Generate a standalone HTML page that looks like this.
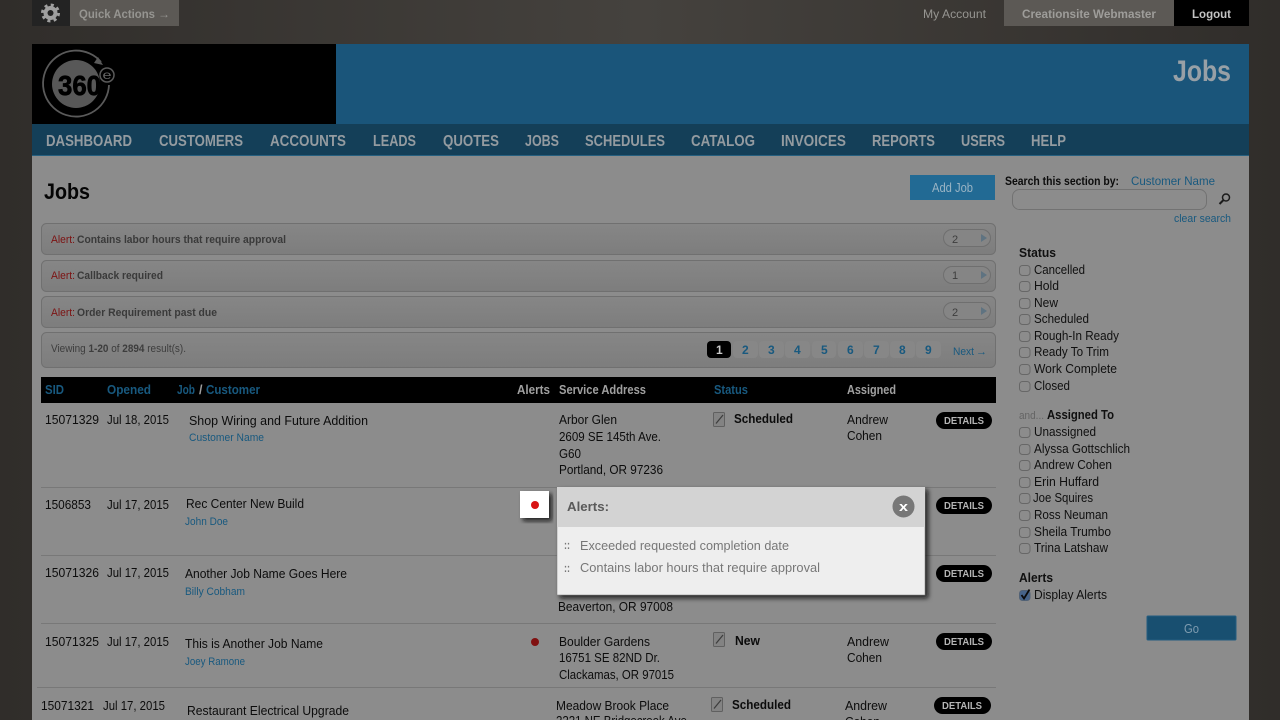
<!DOCTYPE html>
<html lang="en"><head><meta charset="utf-8"><title>Jobs</title>
<style>
html,body{margin:0;padding:0;background:#302d2a;width:1280px;height:720px;overflow:hidden}
svg{display:block;filter:blur(.3px)}
text{font-family:"Liberation Sans",Arial,sans-serif;font-size:13px;fill:#0c0c0c;white-space:pre}
.b{font-weight:700}
.hb{fill:#18597f;font-weight:700}
.nav{font-size:16px;font-weight:700;fill:#949ba0}
.al{font-size:11px;fill:#7c1212}
.at{font-size:11px;font-weight:700;fill:#3a3a3a}
.sm{font-size:11px;fill:#18597f}
.pg{font-size:12px;font-weight:700;fill:#18597f}
.det{font-size:10px;font-weight:700;fill:#b5b5b5}
.pop{fill:#777}
.cb{fill:#8c8c8c;stroke:#676767;stroke-width:1}
.side{font-size:12.5px;fill:#101010}
.div{fill:#787878}
.arr{font-family:"DejaVu Sans",sans-serif}
</style></head><body>
<svg width="1280" height="720" viewBox="0 0 1280 720" xmlns="http://www.w3.org/2000/svg">
<defs>
<linearGradient id="bg" x1="0" x2="1" y1="0" y2="0"><stop offset="0" stop-color="#302d2a"/><stop offset=".5" stop-color="#45423e"/><stop offset="1" stop-color="#302d2a"/></linearGradient>
<linearGradient id="bar" x1="0" x2="0" y1="0" y2="1"><stop offset="0" stop-color="#868686"/><stop offset="1" stop-color="#7d7d7d"/></linearGradient>
<filter id="sh" x="-10%" y="-10%" width="125%" height="130%"><feDropShadow dx="3" dy="3" stdDeviation="2.5" flood-color="#111" flood-opacity=".85"/></filter>
<g id="ed"><rect x=".5" y=".5" width="11" height="14" rx="1" fill="#838383" stroke="#606060"/><path d="M3 11.500 L10 3" stroke="#3c3c3c" stroke-width="1.200" fill="none"/></g>
<g id="pill"><rect x=".5" y=".5" width="47" height="17" rx="8.500" fill="#858585" stroke="#6f6f6f"/><path d="M38 5 L44 9 L38 13 Z" fill="#5f7381"/></g>
</defs>
<rect width="1280" height="720" fill="url(#bg)"/>

<!-- top bar -->
<rect x="32" width="38" height="26" fill="#232323"/>
<circle cx="50.500" cy="13" r="8" fill="none" stroke="#a0a0a0" stroke-width="3" stroke-dasharray="3 3.280"/>
<circle cx="50.500" cy="13" r="7" fill="#a0a0a0"/>
<circle cx="50.500" cy="13" r="3" fill="#232323"/>
<rect x="70" width="109" height="26" fill="#5c5955"/>
<text x="79" y="18" class="b" style="font-size:12px;fill:#969591" textLength="76" lengthAdjust="spacingAndGlyphs">Quick Actions</text>
<text x="158" y="18" style="font-size:12px;fill:#969591" textLength="12" lengthAdjust="spacingAndGlyphs">→</text>
<text x="923" y="18" style="font-size:12px;fill:#969591" textLength="63" lengthAdjust="spacingAndGlyphs">My Account</text>
<rect x="1004" width="170" height="26" fill="#5c5955"/>
<text x="1022" y="18" class="b" style="font-size:12px;fill:#9e9d9a" textLength="134" lengthAdjust="spacingAndGlyphs">Creationsite Webmaster</text>
<rect x="1174" width="75" height="26" fill="#000"/>
<text x="1192" y="18" class="b" style="font-size:12px;fill:#c4c4c4" textLength="39" lengthAdjust="spacingAndGlyphs">Logout</text>

<!-- header -->
<rect x="32" y="44" width="304" height="80" fill="#000"/>
<rect x="336" y="44" width="913" height="80" fill="#1a557a"/>
<circle cx="76" cy="84" r="24" fill="#585858"/>
<path d="M101 62 A33 33 0 1 0 109 85" fill="none" stroke="#5a5a5a" stroke-width="1.800"/>
<path d="M98 57 L103 65 L94 63 Z" fill="#5a5a5a"/>
<text x="58" y="95" class="b" style="font-size:28px;fill:#000;stroke:#000;stroke-width:.7" textLength="43" lengthAdjust="spacingAndGlyphs">360</text>
<circle cx="107" cy="75" r="7" fill="#000" stroke="#5a5a5a" stroke-width="1.500"/>
<text x="102.500" y="79" style="font-size:12px;fill:#666" textLength="9" lengthAdjust="spacingAndGlyphs">e</text>
<text x="1173" y="81" class="b" style="font-size:30px;fill:#98a0a6" textLength="58" lengthAdjust="spacingAndGlyphs">Jobs</text>

<!-- nav -->
<rect x="32" y="124" width="1217" height="31" fill="#143f58"/>
<rect x="32" y="155" width="1217" height="1" fill="#266080"/>
<text x="46" y="146" class="nav" textLength="86" lengthAdjust="spacingAndGlyphs">DASHBOARD</text>
<text x="159" y="146" class="nav" textLength="84" lengthAdjust="spacingAndGlyphs">CUSTOMERS</text>
<text x="270" y="146" class="nav" textLength="76" lengthAdjust="spacingAndGlyphs">ACCOUNTS</text>
<text x="373" y="146" class="nav" textLength="43" lengthAdjust="spacingAndGlyphs">LEADS</text>
<text x="443" y="146" class="nav" textLength="56" lengthAdjust="spacingAndGlyphs">QUOTES</text>
<text x="525" y="146" class="nav" textLength="34" lengthAdjust="spacingAndGlyphs">JOBS</text>
<text x="585" y="146" class="nav" textLength="80" lengthAdjust="spacingAndGlyphs">SCHEDULES</text>
<text x="691" y="146" class="nav" textLength="64" lengthAdjust="spacingAndGlyphs">CATALOG</text>
<text x="781" y="146" class="nav" textLength="65" lengthAdjust="spacingAndGlyphs">INVOICES</text>
<text x="872" y="146" class="nav" textLength="63" lengthAdjust="spacingAndGlyphs">REPORTS</text>
<text x="961" y="146" class="nav" textLength="44" lengthAdjust="spacingAndGlyphs">USERS</text>
<text x="1031" y="146" class="nav" textLength="35" lengthAdjust="spacingAndGlyphs">HELP</text>

<!-- content -->
<rect x="32" y="156" width="1217" height="564" fill="#8c8c8c"/>
<text x="44" y="199" class="b" style="font-size:22px;fill:#050505" textLength="46" lengthAdjust="spacingAndGlyphs">Jobs</text>
<rect x="910" y="175" width="85" height="25" fill="#226a94"/>
<text x="932" y="192" style="font-size:12.500px;fill:#9ab4c4" textLength="41" lengthAdjust="spacingAndGlyphs">Add Job</text>
<text x="1005" y="185" style="font-size:12px;fill:#0c0c0c;font-weight:700" textLength="114" lengthAdjust="spacingAndGlyphs">Search this section by:</text>
<text x="1131" y="185" style="font-size:12px;fill:#18597f" textLength="84" lengthAdjust="spacingAndGlyphs">Customer Name</text>
<rect x="1012.500" y="189.500" width="194" height="20" rx="7" fill="#8c8c8c" stroke="#727272"/>
<circle cx="1226" cy="197.500" r="3.500" fill="none" stroke="#1c1c1c" stroke-width="1.500"/>
<path d="M1223.500 200 L1219.500 204" stroke="#1c1c1c" stroke-width="2"/>
<text x="1174" y="222" style="font-size:11px;fill:#18597f" textLength="57" lengthAdjust="spacingAndGlyphs">clear search</text>

<!-- alert bars -->
<rect x="41.500" y="223.500" width="954" height="31" rx="5" fill="url(#bar)" stroke="#707070"/>
<rect x="41.500" y="260.500" width="954" height="31" rx="5" fill="url(#bar)" stroke="#707070"/>
<rect x="41.500" y="296.500" width="954" height="31" rx="5" fill="url(#bar)" stroke="#707070"/>
<rect x="41.500" y="332.500" width="954" height="35" rx="5" fill="url(#bar)" stroke="#707070"/>
<text x="51" y="243" class="al" textLength="24" lengthAdjust="spacingAndGlyphs">Alert:</text>
<text x="77" y="243" class="at" textLength="209" lengthAdjust="spacingAndGlyphs">Contains labor hours that require approval</text>
<text x="51" y="279" class="al" textLength="24" lengthAdjust="spacingAndGlyphs">Alert:</text>
<text x="77" y="279" class="at" textLength="86" lengthAdjust="spacingAndGlyphs">Callback required</text>
<text x="51" y="316" class="al" textLength="24" lengthAdjust="spacingAndGlyphs">Alert:</text>
<text x="77" y="316" class="at" textLength="140" lengthAdjust="spacingAndGlyphs">Order Requirement past due</text>
<text x="51" y="352" style="font-size:11px;fill:#3d3d3d" textLength="135" lengthAdjust="spacingAndGlyphs">Viewing <tspan font-weight="700">1-20</tspan> of <tspan font-weight="700">2894</tspan> result(s).</text>
<use href="#pill" x="943" y="229"/><use href="#pill" x="943" y="266"/><use href="#pill" x="943" y="302"/>
<text x="952" y="243" style="font-size:11px;fill:#3d3d3d">2</text>
<text x="952" y="279" style="font-size:11px;fill:#3d3d3d">1</text>
<text x="952" y="316" style="font-size:11px;fill:#3d3d3d">2</text>

<!-- pagination -->
<rect x="707" y="341" width="24" height="17" rx="4" fill="#000"/>
<rect x="733" y="341" width="25" height="17" rx="4" fill="#878787"/>
<rect x="759" y="341" width="25" height="17" rx="4" fill="#878787"/>
<rect x="785" y="341" width="25" height="17" rx="4" fill="#878787"/>
<rect x="812" y="341" width="24" height="17" rx="4" fill="#878787"/>
<rect x="838" y="341" width="25" height="17" rx="4" fill="#878787"/>
<rect x="864" y="341" width="25" height="17" rx="4" fill="#878787"/>
<rect x="890" y="341" width="25" height="17" rx="4" fill="#878787"/>
<rect x="916" y="341" width="25" height="17" rx="4" fill="#878787"/>
<text x="716" y="354" class="pg" style="fill:#c8c8c8">1</text>
<text x="742" y="354" class="pg">2</text><text x="768" y="354" class="pg">3</text><text x="794" y="354" class="pg">4</text><text x="821" y="354" class="pg">5</text><text x="847" y="354" class="pg">6</text><text x="873" y="354" class="pg">7</text><text x="899" y="354" class="pg">8</text><text x="925" y="354" class="pg">9</text>
<text x="953" y="355" style="font-size:11px;fill:#18597f" textLength="21" lengthAdjust="spacingAndGlyphs">Next</text>
<text x="976" y="355" style="font-size:11px;fill:#18597f" textLength="11" lengthAdjust="spacingAndGlyphs">→</text>

<!-- table head -->
<rect x="41" y="377" width="955" height="26" fill="#000"/>
<text x="45" y="394" class="hb" style="font-size:12.500px" textLength="19" lengthAdjust="spacingAndGlyphs">SID</text>
<text x="107" y="394" class="hb" style="font-size:12.500px" textLength="44" lengthAdjust="spacingAndGlyphs">Opened</text>
<text x="177" y="394" class="hb" style="font-size:12.500px" textLength="18" lengthAdjust="spacingAndGlyphs">Job</text>
<text x="199" y="394" class="b" style="font-size:12.500px;fill:#a0a0a0">/</text>
<text x="206" y="394" class="hb" style="font-size:12.500px" textLength="54" lengthAdjust="spacingAndGlyphs">Customer</text>
<text x="517" y="394" class="b" style="font-size:12.500px;fill:#a0a0a0" textLength="33" lengthAdjust="spacingAndGlyphs">Alerts</text>
<text x="559" y="394" class="b" style="font-size:12.500px;fill:#a0a0a0" textLength="87" lengthAdjust="spacingAndGlyphs">Service Address</text>
<text x="714" y="394" class="hb" style="font-size:12.500px" textLength="34" lengthAdjust="spacingAndGlyphs">Status</text>
<text x="847" y="394" class="b" style="font-size:12.500px;fill:#a0a0a0" textLength="49" lengthAdjust="spacingAndGlyphs">Assigned</text>

<!-- row 1 -->
<text x="45" y="424" textLength="54" lengthAdjust="spacingAndGlyphs">15071329</text>
<text x="107" y="424" textLength="62" lengthAdjust="spacingAndGlyphs">Jul 18, 2015</text>
<text x="189" y="425" textLength="179" lengthAdjust="spacingAndGlyphs">Shop Wiring and Future Addition</text>
<text x="189" y="441" class="sm" textLength="75" lengthAdjust="spacingAndGlyphs">Customer Name</text>
<text x="559" y="424" textLength="58" lengthAdjust="spacingAndGlyphs">Arbor Glen</text>
<text x="559" y="441" textLength="102" lengthAdjust="spacingAndGlyphs">2609 SE 145th Ave.</text>
<text x="559" y="458" textLength="22" lengthAdjust="spacingAndGlyphs">G60</text>
<text x="559" y="474" textLength="104" lengthAdjust="spacingAndGlyphs">Portland, OR 97236</text>
<use href="#ed" x="713" y="412"/>
<text x="734" y="423" class="b" textLength="59" lengthAdjust="spacingAndGlyphs">Scheduled</text>
<text x="847" y="424" textLength="41" lengthAdjust="spacingAndGlyphs">Andrew</text>
<text x="847" y="440" textLength="35" lengthAdjust="spacingAndGlyphs">Cohen</text>
<rect x="936" y="412" width="56" height="17" rx="8.500" fill="#000"/>
<text x="944" y="424" class="det" textLength="40" lengthAdjust="spacingAndGlyphs">DETAILS</text>
<rect x="41" y="487" width="955" height="1" class="div"/>

<!-- row 2 -->
<text x="45" y="509" textLength="46" lengthAdjust="spacingAndGlyphs">1506853</text>
<text x="107" y="509" textLength="62" lengthAdjust="spacingAndGlyphs">Jul 17, 2015</text>
<text x="186" y="508" textLength="118" lengthAdjust="spacingAndGlyphs">Rec Center New Build</text>
<text x="185" y="525" class="sm" textLength="43" lengthAdjust="spacingAndGlyphs">John Doe</text>
<rect x="936" y="497" width="56" height="17" rx="8.500" fill="#000"/>
<text x="944" y="509" class="det" textLength="40" lengthAdjust="spacingAndGlyphs">DETAILS</text>
<rect x="41" y="555" width="955" height="1" class="div"/>

<!-- row 3 -->
<text x="45" y="577" textLength="54" lengthAdjust="spacingAndGlyphs">15071326</text>
<text x="107" y="577" textLength="62" lengthAdjust="spacingAndGlyphs">Jul 17, 2015</text>
<text x="185" y="578" textLength="162" lengthAdjust="spacingAndGlyphs">Another Job Name Goes Here</text>
<text x="185" y="595" class="sm" textLength="60" lengthAdjust="spacingAndGlyphs">Billy Cobham</text>
<text x="558" y="611" textLength="115" lengthAdjust="spacingAndGlyphs">Beaverton, OR 97008</text>
<rect x="936" y="565" width="56" height="17" rx="8.500" fill="#000"/>
<text x="944" y="577" class="det" textLength="40" lengthAdjust="spacingAndGlyphs">DETAILS</text>
<rect x="41" y="623" width="955" height="1" class="div"/>

<!-- row 4 -->
<text x="45" y="646" textLength="54" lengthAdjust="spacingAndGlyphs">15071325</text>
<text x="107" y="646" textLength="62" lengthAdjust="spacingAndGlyphs">Jul 17, 2015</text>
<text x="185" y="648" textLength="138" lengthAdjust="spacingAndGlyphs">This is Another Job Name</text>
<text x="185" y="665" class="sm" textLength="60" lengthAdjust="spacingAndGlyphs">Joey Ramone</text>
<circle cx="535" cy="642" r="4" fill="#801010"/>
<text x="559" y="646" textLength="91" lengthAdjust="spacingAndGlyphs">Boulder Gardens</text>
<text x="559" y="662" textLength="101" lengthAdjust="spacingAndGlyphs">16751 SE 82ND Dr.</text>
<text x="559" y="679" textLength="115" lengthAdjust="spacingAndGlyphs">Clackamas, OR 97015</text>
<use href="#ed" x="713" y="632"/>
<text x="735" y="645" class="b" textLength="25" lengthAdjust="spacingAndGlyphs">New</text>
<text x="847" y="646" textLength="42" lengthAdjust="spacingAndGlyphs">Andrew</text>
<text x="847" y="662" textLength="35" lengthAdjust="spacingAndGlyphs">Cohen</text>
<rect x="936" y="633" width="56" height="17" rx="8.500" fill="#000"/>
<text x="944" y="645" class="det" textLength="40" lengthAdjust="spacingAndGlyphs">DETAILS</text>
<rect x="37" y="687" width="959" height="1" class="div"/>

<!-- row 5 -->
<text x="41" y="710" textLength="53" lengthAdjust="spacingAndGlyphs">15071321</text>
<text x="103" y="710" textLength="62" lengthAdjust="spacingAndGlyphs">Jul 17, 2015</text>
<text x="187" y="715" textLength="162" lengthAdjust="spacingAndGlyphs">Restaurant Electrical Upgrade</text>
<text x="556" y="710" textLength="113" lengthAdjust="spacingAndGlyphs">Meadow Brook Place</text>
<text x="556" y="725" textLength="134" lengthAdjust="spacingAndGlyphs">2221 NE Bridgecreek Ave.</text>
<use href="#ed" x="711" y="697"/>
<text x="732" y="709" class="b" textLength="59" lengthAdjust="spacingAndGlyphs">Scheduled</text>
<text x="845" y="710" textLength="42" lengthAdjust="spacingAndGlyphs">Andrew</text>
<text x="845" y="726" textLength="35" lengthAdjust="spacingAndGlyphs">Cohen</text>
<rect x="934" y="697" width="57" height="17" rx="8.500" fill="#000"/>
<text x="942" y="709" class="det" textLength="40" lengthAdjust="spacingAndGlyphs">DETAILS</text>

<!-- sidebar -->
<text x="1019" y="257" class="b side" textLength="37" lengthAdjust="spacingAndGlyphs">Status</text>
<rect class="cb" x="1019.500" y="265.500" width="10.500" height="10" rx="3"/><text x="1034" y="274" class="side" textLength="51" lengthAdjust="spacingAndGlyphs">Cancelled</text>
<rect class="cb" x="1019.500" y="281.500" width="10.500" height="10" rx="3"/><text x="1034" y="290" class="side" textLength="25" lengthAdjust="spacingAndGlyphs">Hold</text>
<rect class="cb" x="1019.500" y="298.500" width="10.500" height="10" rx="3"/><text x="1034" y="307" class="side" textLength="24" lengthAdjust="spacingAndGlyphs">New</text>
<rect class="cb" x="1019.500" y="314.500" width="10.500" height="10" rx="3"/><text x="1034" y="323" class="side" textLength="55" lengthAdjust="spacingAndGlyphs">Scheduled</text>
<rect class="cb" x="1019.500" y="331.500" width="10.500" height="10" rx="3"/><text x="1034" y="340" class="side" textLength="85" lengthAdjust="spacingAndGlyphs">Rough-In Ready</text>
<rect class="cb" x="1019.500" y="347.500" width="10.500" height="10" rx="3"/><text x="1034" y="356" class="side" textLength="75" lengthAdjust="spacingAndGlyphs">Ready To Trim</text>
<rect class="cb" x="1019.500" y="364.500" width="10.500" height="10" rx="3"/><text x="1034" y="373" class="side" textLength="83" lengthAdjust="spacingAndGlyphs">Work Complete</text>
<rect class="cb" x="1019.500" y="381.500" width="10.500" height="10" rx="3"/><text x="1034" y="390" class="side" textLength="36" lengthAdjust="spacingAndGlyphs">Closed</text>

<text x="1019" y="419" style="font-size:11px;fill:#646464" textLength="25" lengthAdjust="spacingAndGlyphs">and...</text>
<text x="1047" y="419" class="b side" textLength="67" lengthAdjust="spacingAndGlyphs">Assigned To</text>
<rect class="cb" x="1019.500" y="427.500" width="10.500" height="10" rx="3"/><text x="1034" y="436" class="side" textLength="62" lengthAdjust="spacingAndGlyphs">Unassigned</text>
<rect class="cb" x="1019.500" y="444.500" width="10.500" height="10" rx="3"/><text x="1034" y="453" class="side" textLength="96" lengthAdjust="spacingAndGlyphs">Alyssa Gottschlich</text>
<rect class="cb" x="1019.500" y="460.500" width="10.500" height="10" rx="3"/><text x="1034" y="469" class="side" textLength="78" lengthAdjust="spacingAndGlyphs">Andrew Cohen</text>
<rect class="cb" x="1019.500" y="477.500" width="10.500" height="10" rx="3"/><text x="1034" y="486" class="side" textLength="65" lengthAdjust="spacingAndGlyphs">Erin Huffard</text>
<rect class="cb" x="1019.500" y="493.500" width="10.500" height="10" rx="3"/><text x="1033" y="502" class="side" textLength="60" lengthAdjust="spacingAndGlyphs">Joe Squires</text>
<rect class="cb" x="1019.500" y="510.500" width="10.500" height="10" rx="3"/><text x="1034" y="519" class="side" textLength="74" lengthAdjust="spacingAndGlyphs">Ross Neuman</text>
<rect class="cb" x="1019.500" y="527.500" width="10.500" height="10" rx="3"/><text x="1034" y="536" class="side" textLength="77" lengthAdjust="spacingAndGlyphs">Sheila Trumbo</text>
<rect class="cb" x="1019.500" y="543.500" width="10.500" height="10" rx="3"/><text x="1034" y="552" class="side" textLength="74" lengthAdjust="spacingAndGlyphs">Trina Latshaw</text>

<text x="1019" y="582" class="b side" textLength="34" lengthAdjust="spacingAndGlyphs">Alerts</text>
<rect x="1019.500" y="590.500" width="10.500" height="10" rx="3" fill="#47648a" stroke="#526276"/>
<path d="M1021.500 595 L1024 598.500 L1029.500 589.500" fill="none" stroke="#0c0c0c" stroke-width="1.800"/>
<text x="1034" y="599" class="side" textLength="73" lengthAdjust="spacingAndGlyphs">Display Alerts</text>
<rect x="1147" y="616" width="89" height="24" rx="1" fill="#184f70" stroke="#235d80"/>
<text x="1184" y="633" style="font-size:12.500px;fill:#7f9cb0" textLength="15" lengthAdjust="spacingAndGlyphs">Go</text>

<!-- highlighted alert dot -->
<rect x="520" y="491" width="29" height="27" fill="#fff" filter="url(#sh)"/>
<circle cx="535" cy="505" r="4" fill="#d81414"/>

<!-- popup -->
<rect x="557" y="487" width="368" height="108" fill="#eee" stroke="#777" stroke-width=".5" filter="url(#sh)"/>
<rect x="557" y="487" width="368" height="40" fill="#d3d3d3"/>
<text x="567" y="511" class="b" style="font-size:12.500px;fill:#5a5a5a" textLength="42" lengthAdjust="spacingAndGlyphs">Alerts:</text>
<circle cx="903.500" cy="506.500" r="11" fill="#777"/>
<text x="899" y="511" class="b" style="font-size:13px;fill:#fff" textLength="9" lengthAdjust="spacingAndGlyphs">x</text>
<text x="564" y="549" class="b pop" style="font-size:12px" textLength="6" lengthAdjust="spacingAndGlyphs">::</text>
<text x="580" y="550" class="pop" textLength="209" lengthAdjust="spacingAndGlyphs">Exceeded requested completion date</text>
<text x="564" y="572" class="b pop" style="font-size:12px" textLength="6" lengthAdjust="spacingAndGlyphs">::</text>
<text x="580" y="572" class="pop" textLength="240" lengthAdjust="spacingAndGlyphs">Contains labor hours that require approval</text>
</svg>
</body></html>
